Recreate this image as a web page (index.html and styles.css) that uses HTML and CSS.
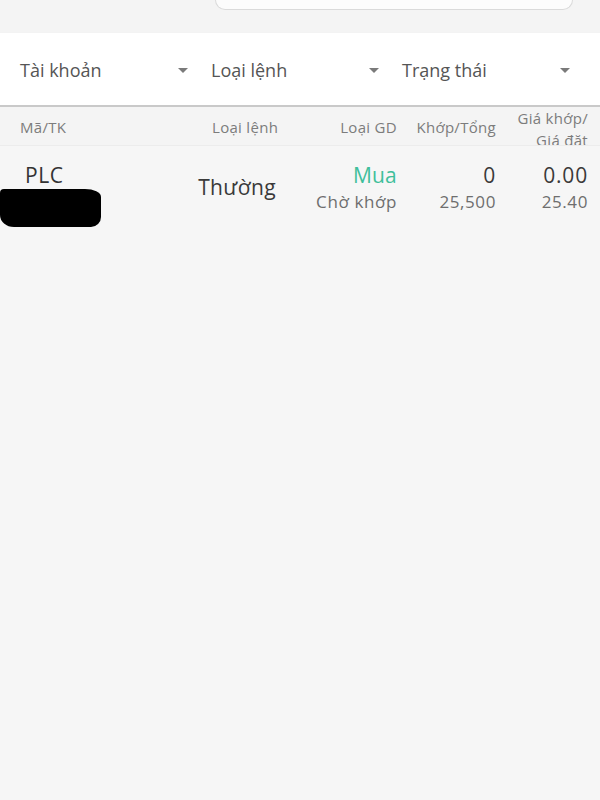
FILE: index.html
```html
<!DOCTYPE html>
<html>
<head>
    <title>Sổ lệnh</title>
    <link rel="stylesheet" href="styles.css">
</head>
<body>

    <div class="search-area">
        <div class="search-box"></div>
    </div>

    <div class="filters">
        <div class="filter">
            <span>Tài khoản</span>
            <span class="caret"></span>
        </div>
        <div class="filter">
            <span>Loại lệnh</span>
            <span class="caret"></span>
        </div>
        <div class="filter">
            <span>Trạng thái</span>
            <span class="caret"></span>
        </div>
    </div>

    <div class="table-head">
        <div class="th">Mã/TK</div>
        <div class="th th-type">Loại lệnh</div>
        <div class="th right">Loại GD</div>
        <div class="th right">Khớp/Tổng</div>
        <div class="th right th-price">Giá khớp/<br>Giá đặt</div>
    </div>

    <div class="order-row">
        <div class="cell">
            <div class="symbol">PLC</div>
            <div class="acct-mask"></div>
        </div>
        <div class="cell right">
            <div class="order-type">Thường</div>
        </div>
        <div class="cell right">
            <div class="main buy">Mua</div>
            <div class="sub">Chờ khớp</div>
        </div>
        <div class="cell right">
            <div class="main">0</div>
            <div class="sub">25,500</div>
        </div>
        <div class="cell right">
            <div class="main">0.00</div>
            <div class="sub">25.40</div>
        </div>
    </div>

</body>
</html>
```

FILE: styles.css
```css
body {
    margin: 0;
    font-family: "Open Sans", "Noto Sans", sans-serif;
    background-color: #f6f6f6;
    color: #3a3a3a;
}
.search-area {
    height: 33px;
    background-color: #f4f4f4;
}
.search-box {
    margin-left: 215px;
    width: 356px;
    height: 9px;
    background-color: #fcfcfc;
    border: 1px solid #dadada;
    border-top: none;
    border-radius: 0 0 10px 10px;
}
.filters {
    display: grid;
    grid-template-columns: 191px 191px 191px;
    height: 72px;
    padding-left: 20px;
    background-color: #fff;
    border-bottom: 2px solid #c9c9c9;
    box-shadow: 0 1px 2px rgba(0, 0, 0, 0.08);
}
.filter {
    display: flex;
    align-items: center;
    justify-content: space-between;
    padding-top: 2px;
    padding-right: 23px;
    font-size: 18px;
    color: #555;
}
.caret {
    width: 0;
    height: 0;
    border-left: 5px solid transparent;
    border-right: 5px solid transparent;
    border-top: 5px solid #7a7a7a;
}
.table-head,
.order-row {
    display: grid;
    grid-template-columns: 176px 80px 121px 99px 92px;
    padding: 0 12px 0 20px;
}
.table-head {
    height: 38px;
    overflow: hidden;
    background-color: #f4f4f4;
    border-bottom: 1px solid #ececec;
    font-size: 15px;
    letter-spacing: 0.3px;
    color: #7c7c7c;
}
.th {
    align-self: center;
    margin-bottom: 4px;
    white-space: nowrap;
}
.th-type {
    padding-left: 16px;
}
.th-price {
    align-self: start;
    margin-bottom: 0;
    line-height: 22px;
}
.right {
    text-align: right;
}
.order-row {
    padding-top: 16px;
    padding-bottom: 10px;
}
.symbol {
    margin-left: 5px;
    font-size: 21px;
    line-height: 27px;
    letter-spacing: 0.6px;
    color: #333;
}
.acct-mask {
    width: 101px;
    height: 38px;
    margin-left: -20px;
    background-color: #000;
    border-radius: 4px 16px 10px 14px / 4px 8px 10px 12px;
}
.order-type {
    margin-top: 12px;
    font-size: 21px;
    line-height: 27px;
    letter-spacing: 0.4px;
    color: #3a3a3a;
}
.main {
    font-size: 21px;
    line-height: 27px;
    letter-spacing: 0.8px;
    color: #3a3a3a;
}
.buy {
    color: #3fbf9b;
    letter-spacing: 0.2px;
}
.sub {
    margin-top: 2px;
    font-size: 17px;
    line-height: 22px;
    letter-spacing: 0.6px;
    color: #6e6e6e;
}
```
